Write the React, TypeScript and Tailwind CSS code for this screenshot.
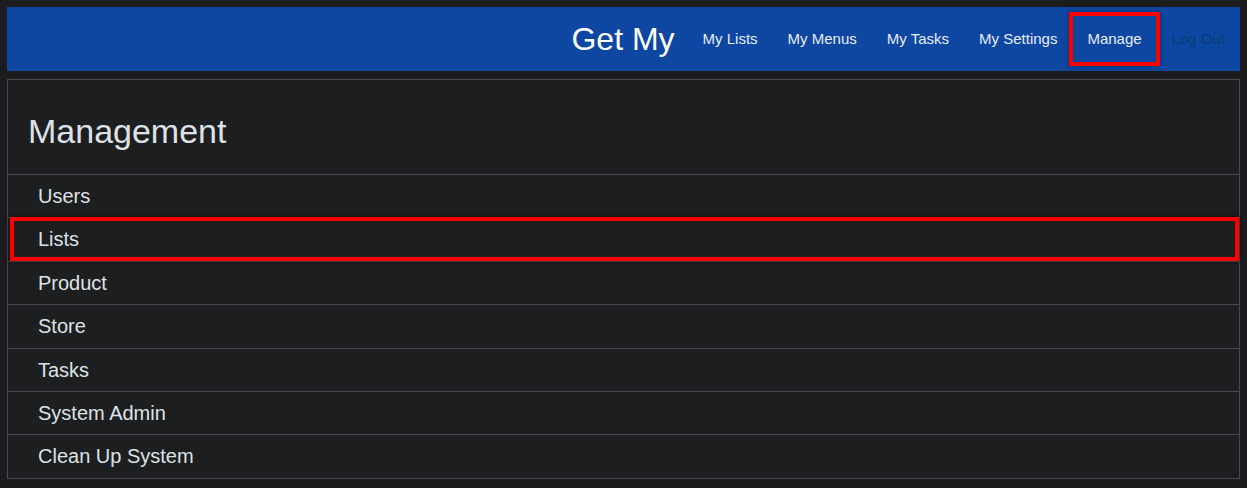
import React from 'react';

const navLinks = ['My Lists', 'My Menus', 'My Tasks', 'My Settings'];

const items = ['Users', 'Lists', 'Product', 'Store', 'Tasks', 'System Admin', 'Clean Up System'];

export default function App() {
  return (
    <div
      className="min-h-screen bg-[#1c1c1e] pt-[7px] px-[7px]"
      style={{ fontFamily: '"Liberation Sans", Arial, sans-serif' }}
    >
      {/* Navbar */}
      <nav className="h-[64px] bg-[#0d47a1] flex items-center justify-end">
        <span className="text-[32px] text-white mr-[13px] leading-none">Get My</span>
        {navLinks.map((link) => (
          <a key={link} className="h-[48px] flex items-center px-[15px] text-[15px] text-[#e8edf5]">
            {link}
          </a>
        ))}
        <a className="h-[48px] flex items-center px-[15px] text-[15px] text-[#e8edf5] shadow-[0_0_0_3px_#ff0000,inset_0_0_0_1px_#ff0000,0_0_5px_3px_rgba(0,0,0,0.35)]">
          Manage
        </a>
        <a className="h-[48px] flex items-center px-[15px] text-[15px] text-[#0b3976]">Log Out</a>
      </nav>

      {/* Management card */}
      <div className="mt-[8px] border border-[#48494d] bg-[#1d1e20] text-[#dee2e6]">
        <div className="pt-[24px] pb-[16px] px-[20px] text-[34px] leading-[54px] border-b border-[#48494d]">
          Management
        </div>
        <ul>
          {items.map((item, i) => (
            <li
              key={item}
              className={`relative pl-[30px] py-[10px] text-[20px] leading-[22.4px] ${
                i < items.length - 1 ? 'border-b border-[#48494d]' : ''
              }`}
            >
              {item}
              {item === 'Lists' && (
                <span className="absolute -top-[1px] bottom-0 left-[2px] right-0 border-[4px] border-[#ff0000] shadow-[0_0_5px_1px_rgba(0,0,0,0.4)]" />
              )}
            </li>
          ))}
        </ul>
      </div>
    </div>
  );
}
